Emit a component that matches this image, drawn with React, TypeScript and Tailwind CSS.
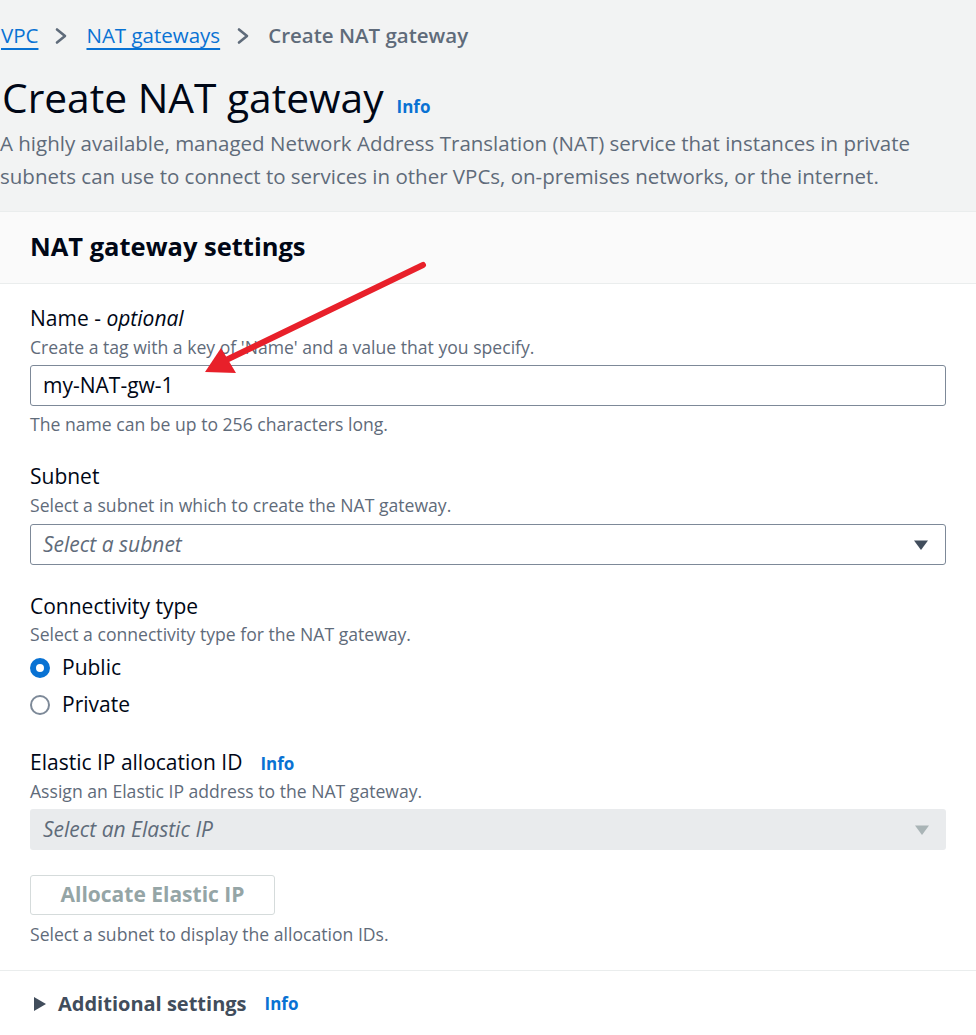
function Caret({ disabled }: { disabled?: boolean }) {
  return (
    <svg width="16" height="12" viewBox="0 0 16 12" className="shrink-0">
      <path d="M1 1.5h14L8 11z" fill={disabled ? '#a9b4b6' : '#414d5c'} />
    </svg>
  );
}

function Crumb() {
  return (
    <svg width="14" height="18" viewBox="0 0 14 18" className="shrink-0">
      <path d="M3 2.5l8 6.5-8 6.5" fill="none" stroke="#5f6b7a" strokeWidth="2.6" strokeLinecap="round" strokeLinejoin="round" />
    </svg>
  );
}

function Radio({ checked, label }: { checked?: boolean; label: string }) {
  return (
    <div className="flex items-center h-[30px] gap-[12px]">
      <span
        className={`w-[20px] h-[20px] rounded-full box-border ${
          checked ? 'border-[6px] border-[#0972d3] bg-white' : 'border-2 border-[#7d8998] bg-white'
        }`}
      />
      <span className="text-[21px] text-[#000716]">{label}</span>
    </div>
  );
}

export default function App() {
  return (
    <div className="relative min-h-screen bg-[#f2f3f3] font-['Open_Sans',sans-serif] overflow-hidden">
      {/* breadcrumbs */}
      <nav className="pt-[19px] h-[52px] flex items-center text-[20.5px] leading-[33px]">
        <a className="text-[#0972d3] underline underline-offset-[5px] decoration-[2px] pl-px">VPC</a>
        <span className="ml-[16px] mr-[18px]"><Crumb /></span>
        <a className="text-[#0972d3] underline underline-offset-[5px] decoration-[2px]">NAT gateways</a>
        <span className="ml-[16px] mr-[18px]"><Crumb /></span>
        <span className="font-semibold text-[#5f6b7a]">Create NAT gateway</span>
      </nav>

      <div className="mt-[18px] flex items-baseline gap-[13px] pl-[2px]">
        <h1 className="text-[40.7px] leading-[54px] text-[#000716] font-normal">Create NAT gateway</h1>
        <span className="text-[17px] font-bold text-[#0972d3]">Info</span>
      </div>
      <p className="mt-[3px] text-[20.5px] leading-[33px] text-[#5f6b7a] pr-[40px]">
        A highly available, managed Network Address Translation (NAT) service that instances in private subnets can use to connect to services in other VPCs, on-premises networks, or the internet.
      </p>

      {/* settings card */}
      <section className="mt-[18px] bg-white">
        <div className="h-[73px] bg-[#fafafa] border-t border-b border-[#eaeded] pt-[14px] px-[30px]">
          <h2 className="text-[25.5px] leading-[40px] font-bold text-[#000716]">NAT gateway settings</h2>
        </div>

        <div className="px-[30px] pt-[19px]">
          <div className="text-[21px] leading-[30px] text-[#000716]">
            Name - <i>optional</i>
          </div>
          <div className="mt-[2px] text-[17.6px] leading-[24px] text-[#5f6b7a]">
            Create a tag with a key of 'Name' and a value that you specify.
          </div>
          <div className="mt-[6px] h-[41px] border border-[#7d8998] rounded-[3px] flex items-center px-[12px] text-[21px] text-[#000716]">
            my-NAT-gw-1
          </div>
          <div className="mt-[6px] text-[17.6px] leading-[24px] text-[#5f6b7a]">
            The name can be up to 256 characters long.
          </div>

          <div className="mt-[25px] text-[21px] leading-[30px] text-[#000716]">Subnet</div>
          <div className="mt-[2px] text-[17.6px] leading-[24px] text-[#5f6b7a]">
            Select a subnet in which to create the NAT gateway.
          </div>
          <div className="mt-[7px] h-[41px] border border-[#7d8998] rounded-[3px] flex items-center justify-between pl-[12px] pr-[16px]">
            <span className="text-[21px] italic text-[#5f6b7a]">Select a subnet</span>
            <Caret />
          </div>

          <div className="mt-[26px] text-[21px] leading-[30px] text-[#000716]">Connectivity type</div>
          <div className="mt-[1px] text-[17.6px] leading-[24px] text-[#5f6b7a]">
            Select a connectivity type for the NAT gateway.
          </div>
          <div className="mt-[7px] flex flex-col gap-[7px]">
            <Radio checked label="Public" />
            <Radio label="Private" />
          </div>

          <div className="mt-[27px] flex items-baseline gap-[18px] text-[21px] leading-[30px] text-[#000716]">
            Elastic IP allocation ID
            <span className="text-[17px] font-bold text-[#0972d3]">Info</span>
          </div>
          <div className="text-[17.6px] leading-[24px] text-[#5f6b7a]">
            Assign an Elastic IP address to the NAT gateway.
          </div>
          <div className="mt-[6px] h-[41px] bg-[#e9ebed] rounded-[3px] flex items-center justify-between pl-[13px] pr-[16px]">
            <span className="text-[21px] italic text-[#5f6b7a]">Select an Elastic IP</span>
            <Caret disabled />
          </div>
          <button className="mt-[25px] h-[40px] w-[245px] border border-[#d5dbdb] rounded-[3px] bg-white text-[21px] font-bold text-[#95a5a6]">
            Allocate Elastic IP
          </button>
          <div className="mt-[7px] text-[17.6px] leading-[24px] text-[#5f6b7a]">
            Select a subnet to display the allocation IDs.
          </div>
        </div>

        <div className="mt-[24px] border-t border-[#eaeded] px-[33px] pt-[18px] pb-[20px] flex items-center">
          <svg width="14" height="16" viewBox="0 0 14 16" className="shrink-0">
            <path d="M1 1l12 7-12 7z" fill="#414d5c" />
          </svg>
          <span className="ml-[11px] text-[20px] leading-[30px] font-bold text-[#414d5c]">Additional settings</span>
          <span className="ml-[18px] text-[17px] font-bold text-[#0972d3]">Info</span>
        </div>
      </section>

      {/* annotation arrow */}
      <svg className="absolute left-0 top-0 pointer-events-none" width="976" height="1035">
        <line x1="423" y1="265" x2="222" y2="362" stroke="#e8202a" strokeWidth="6" strokeLinecap="round" />
        <path d="M205 372 L221 348 L236 373 Z" fill="#e8202a" />
      </svg>
    </div>
  );
}
